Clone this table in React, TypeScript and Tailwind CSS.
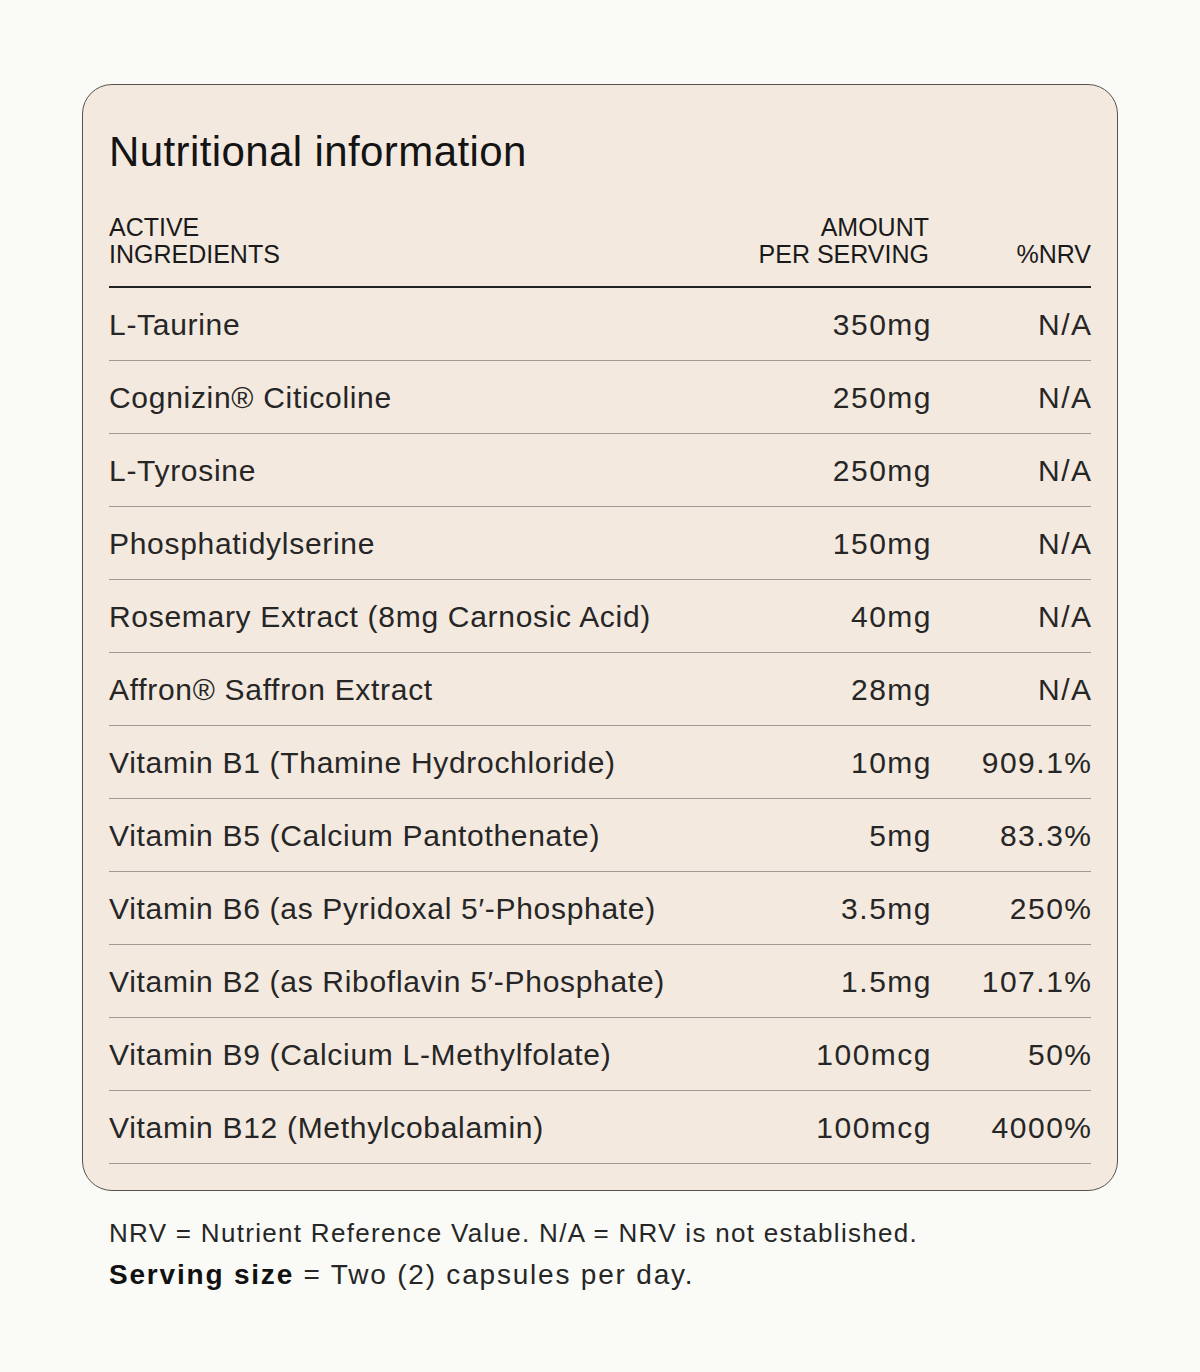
import React from "react";

const rows: [string, string, string][] = [
  ["L-Taurine", "350mg", "N/A"],
  ["Cognizin® Citicoline", "250mg", "N/A"],
  ["L-Tyrosine", "250mg", "N/A"],
  ["Phosphatidylserine", "150mg", "N/A"],
  ["Rosemary Extract (8mg Carnosic Acid)", "40mg", "N/A"],
  ["Affron® Saffron Extract", "28mg", "N/A"],
  ["Vitamin B1 (Thamine Hydrochloride)", "10mg", "909.1%"],
  ["Vitamin B5 (Calcium Pantothenate)", "5mg", "83.3%"],
  ["Vitamin B6 (as Pyridoxal 5′-Phosphate)", "3.5mg", "250%"],
  ["Vitamin B2 (as Riboflavin 5′-Phosphate)", "1.5mg", "107.1%"],
  ["Vitamin B9 (Calcium L-Methylfolate)", "100mcg", "50%"],
  ["Vitamin B12 (Methylcobalamin)", "100mcg", "4000%"],
];

export default function App() {
  return (
    <div
      className="min-h-screen bg-[#fafaf6] pt-[84px] px-[82px] text-[#262626]"
      style={{ fontFamily: '"Liberation Sans", Arial, sans-serif' }}
    >
      <div className="rounded-[30px] border-[1.5px] border-[#57524d] bg-[#f3e9df] px-[26px] pt-[46px] pb-[26px]">
        <h1 className="text-[42px] leading-[42px] tracking-[0.4px] text-[#141414]">Nutritional information</h1>
        <div className="mt-[41px] flex items-end border-b-2 border-[#222] pb-[18px] text-[25px] leading-[27px] uppercase text-[#1a1a1a]">
          <div className="flex-1">
            Active
            <br />
            Ingredients
          </div>
          <div className="text-right">
            Amount
            <br />
            Per Serving
          </div>
          <div className="w-[162px] text-right">%NRV</div>
        </div>
        {rows.map(([name, amt, nrv]) => (
          <div
            key={name}
            className="flex h-[73px] items-center border-b-[1.5px] border-[#a39b93] text-[30px] tracking-[0.7px]"
          >
            <div className="flex-1">{name}</div>
            <div className="text-right tracking-[1.5px] mr-[-1.5px]">{amt}</div>
            <div className="w-[162px] text-right tracking-[1.5px] mr-[-1.5px]">{nrv}</div>
          </div>
        ))}
      </div>
      <div className="px-[27px] pt-[22px]">
        <p className="text-[26px] leading-[40px] tracking-[1.3px]">
          NRV = Nutrient Reference Value. N/A = NRV is not established.
        </p>
        <p className="text-[28px] leading-[44px] tracking-[1.8px]">
          <span className="font-bold text-[#111]">Serving size</span> = Two (2) capsules per day.
        </p>
      </div>
    </div>
  );
}
